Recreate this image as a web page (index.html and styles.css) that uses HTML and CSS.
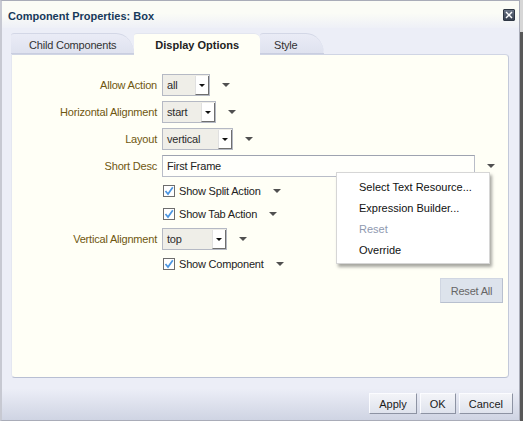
FILE: index.html
```html
<!DOCTYPE html>
<html lang="en">
<head>
    <meta charset="UTF-8">
    <title>Component Properties: Box</title>
    <link rel="stylesheet" href="styles.css">
</head>
<body>
    <div class="dialog">
        <div class="titlebar">
            <span class="title">Component Properties: Box</span>
            <button class="close" title="Close">
                <svg width="8" height="8" viewBox="0 0 8 8"><path d="M1 1 L7 7 M7 1 L1 7" stroke="#fff" stroke-width="1.4"/></svg>
            </button>
        </div>

        <div class="tabs">
            <div class="tab">Child Components</div>
            <div class="tab active">Display Options</div>
            <div class="tab tab-last">Style</div>
        </div>

        <div class="panel">
            <div class="form">
                <span class="label">Allow Action</span>
                <div class="field">
                    <div class="select select-action"><span class="select-value">all</span><span class="select-btn"></span></div>
                    <span class="menu-arrow"></span>
                </div>

                <span class="label">Horizontal Alignment</span>
                <div class="field">
                    <div class="select select-halign"><span class="select-value">start</span><span class="select-btn"></span></div>
                    <span class="menu-arrow"></span>
                </div>

                <span class="label">Layout</span>
                <div class="field">
                    <div class="select select-layout"><span class="select-value">vertical</span><span class="select-btn"></span></div>
                    <span class="menu-arrow"></span>
                </div>

                <span class="label">Short Desc</span>
                <div class="field">
                    <input class="text-input" type="text" value="First Frame">
                    <span class="menu-arrow"></span>
                </div>

                <div class="field no-label">
                    <label class="check"><span class="checkbox"><svg width="10" height="10" viewBox="0 0 10 10"><path d="M1.5 5 L4 8 L8.8 1.2" fill="none" stroke="#4b95e0" stroke-width="1.7"/></svg></span>Show Split Action</label>
                    <span class="menu-arrow"></span>
                </div>

                <div class="field no-label">
                    <label class="check"><span class="checkbox"><svg width="10" height="10" viewBox="0 0 10 10"><path d="M1.5 5 L4 8 L8.8 1.2" fill="none" stroke="#4b95e0" stroke-width="1.7"/></svg></span>Show Tab Action</label>
                    <span class="menu-arrow"></span>
                </div>

                <span class="label">Vertical Alignment</span>
                <div class="field">
                    <div class="select select-valign"><span class="select-value">top</span><span class="select-btn"></span></div>
                    <span class="menu-arrow"></span>
                </div>

                <div class="field no-label">
                    <label class="check"><span class="checkbox"><svg width="10" height="10" viewBox="0 0 10 10"><path d="M1.5 5 L4 8 L8.8 1.2" fill="none" stroke="#4b95e0" stroke-width="1.7"/></svg></span>Show Component</label>
                    <span class="menu-arrow"></span>
                </div>
            </div>

            <div class="panel-actions">
                <button class="reset-all">Reset All</button>
            </div>
        </div>

        <div class="footer">
            <button class="btn">Apply</button>
            <button class="btn">OK</button>
            <button class="btn">Cancel</button>
        </div>

        <!-- popup for the Short Desc arrow -->
        <div class="menu">
            <div class="menu-item">Select Text Resource...</div>
            <div class="menu-item">Expression Builder...</div>
            <div class="menu-item disabled">Reset</div>
            <div class="menu-item">Override</div>
        </div>
    </div>
</body>
</html>
```

FILE: styles.css
```css
* {
    box-sizing: border-box;
    margin: 0;
    padding: 0;
}

html {
    height: 100%;
    background: linear-gradient(#d6d6d6 0 32px, #585858 32px);
}

body {
    font-family: "Liberation Sans", Arial, sans-serif;
    font-size: 11px;
    color: #222;
}

button {
    font: inherit;
    cursor: pointer;
}

.dialog {
    position: relative;
    width: 520px;
    height: 421px;
    display: flex;
    flex-direction: column;
    background-color: #eceef7;
    border: 1px solid #a9acb8;
    border-left: 2px solid #c7c9d2;
}

/* Title bar */
.titlebar {
    height: 27px;
    display: flex;
    justify-content: space-between;
    align-items: center;
    padding: 2px 4px 0 6px;
    background: linear-gradient(#fbfcf6 45%, #eef0f7);
}

.title {
    font-weight: bold;
    color: #173a5a;
}

.close {
    align-self: flex-start;
    margin-top: 6px;
    width: 12px;
    height: 12px;
    display: flex;
    align-items: center;
    justify-content: center;
    border: 1px solid #2f3744;
    border-radius: 1px;
    background: linear-gradient(#6b7587, #384150);
}

/* Tabs */
.tabs {
    display: flex;
    align-items: flex-end;
    height: 21px;
    margin: 5px 0 0 9px;
}

.tab {
    height: 21px;
    display: flex;
    align-items: center;
    padding: 2px 18px 0;
    color: #333;
    letter-spacing: -0.2px;
    background: linear-gradient(#eaecf6, #dfe2ef);
    border-top: 1px solid #d3d7e6;
    border-bottom: 1px solid #c9cee0;
    border-radius: 3px 18px 0 0 / 3px 21px 0 0;
}

.tab.active {
    position: relative;
    z-index: 1;
    height: 22px;
    margin-bottom: -1px;
    padding: 2px 21px 0;
    font-weight: bold;
    letter-spacing: 0;
    color: #222;
    background: #fffff6;
    border-top-color: #e3e6f0;
    border-bottom-color: #fffff6;
    border-radius: 3px 6px 0 0;
}

.tab-last {
    padding: 2px 26px 0 14px;
}

/* Content panel */
.panel {
    height: 324px;
    margin: 0 10px 0 9px;
    background-color: #fffff6;
    border: 1px solid #d0d5e4;
    border-left-color: #e4e7f1;
    border-right-color: #c3c9da;
    border-bottom-color: #b8bfd3;
    border-radius: 0 4px 4px 4px;
}

.form {
    display: grid;
    grid-template-columns: 145px auto;
    grid-template-rows: 22px 22px 22px 22px 18px 18px 22px 18px;
    column-gap: 5px;
    row-gap: 5px;
    align-items: center;
    padding-top: 19px;
    letter-spacing: -0.2px;
}

.label {
    text-align: right;
    color: #6f5710;
}

.field {
    display: flex;
    align-items: center;
}

.field.no-label {
    grid-column: 2;
    padding-left: 1px;
}

.menu-arrow {
    margin-left: 12px;
    border-style: solid;
    border-width: 4px 4px 0;
    border-color: #505050 transparent transparent;
}

.select {
    display: flex;
    height: 22px;
    border: 1px solid #b5b9c4;
    background-color: #efeee8;
    color: #2b2b2b;
}

.select-action { width: 48px; }
.select-halign { width: 54px; }
.select-layout { width: 71px; }
.select-valign { width: 65px; }

.select-value {
    flex: 1;
    padding-left: 4px;
    line-height: 20px;
}

.select-btn {
    width: 14px;
    margin: 1px 0 0;
    display: flex;
    align-items: center;
    justify-content: center;
    background-color: #fff;
    border-left: 1px solid #e0e0e0;
    border-right: 1px solid #6f6f6f;
    border-bottom: 1px solid #6f6f6f;
}

.select-btn::after {
    content: "";
    border-style: solid;
    border-width: 3px 3px 0;
    border-color: #111 transparent transparent;
}

.text-input {
    width: 313px;
    height: 22px;
    padding-left: 4px;
    font: inherit;
    letter-spacing: -0.2px;
    color: #222;
    background-color: #fffffb;
    border: 1px solid #b9bdc8;
    border-top-color: #9ea3b0;
    outline: none;
}

.check {
    display: flex;
    align-items: center;
    gap: 4px;
    color: #222;
}

.checkbox {
    width: 12px;
    height: 12px;
    display: flex;
    align-items: center;
    justify-content: center;
    background-color: #fff;
    border: 1px solid #6d6d6d;
}

.panel-actions {
    display: flex;
    justify-content: flex-end;
    padding: 5px 5px 0 0;
}

.reset-all {
    width: 63px;
    height: 25px;
    letter-spacing: -0.2px;
    color: #666;
    background-color: #dde3ec;
    border: 1px solid #d0d6e2;
    border-right-color: #b8c0cf;
    border-bottom-color: #b8c0cf;
}

/* Bottom buttons */
.footer {
    flex: 1;
    display: flex;
    justify-content: flex-end;
    align-items: flex-start;
    gap: 3px;
    padding: 15px 6px 0 0;
    background: linear-gradient(#eceef7 25%, #cfd4e3);
}

.btn {
    height: 21px;
    min-width: 36px;
    padding: 0 9px;
    color: #1a1a1a;
    background: linear-gradient(#f3f4f8, #dfe3ed);
    border: 1px solid;
    border-color: #fbfcff #8d93a3 #8d93a3 #fbfcff;
}

/* Popup menu */
.menu {
    position: absolute;
    left: 334px;
    top: 171px;
    width: 154px;
    padding: 4px 0 2px;
    background-color: #fff;
    border: 1px solid #d6d6d6;
    box-shadow: 2px 3px 3px rgba(0, 0, 0, 0.35);
}

.menu-item {
    line-height: 21px;
    padding-left: 22px;
    color: #111;
}

.menu-item.disabled {
    color: #8f99b0;
}
```
